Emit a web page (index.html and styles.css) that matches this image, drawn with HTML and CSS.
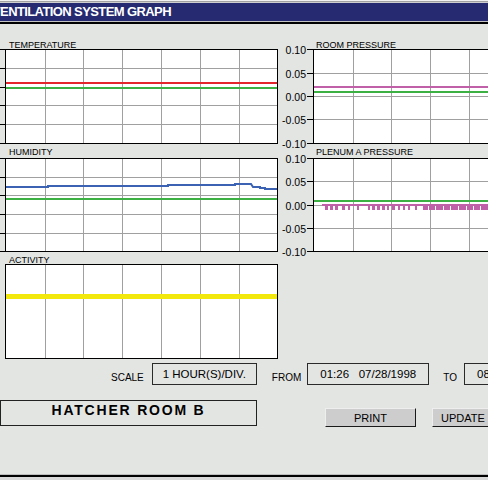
FILE: index.html
```html
<html>
	<head>
		<title>Ventilation System Graph</title>
		<link rel="stylesheet" href="styles.css">
	</head>
	<body>
<div class="frame-top"></div>
<div class="titlebar"><span>VENTILATION SYSTEM GRAPH</span></div>

<div class="main">
	<div class="charts">
		<!-- row 1 -->
		<div class="chart first">
			<div class="chart-title left">TEMPERATURE</div>
			<svg class="plot" width="278" height="95" viewBox="0 0 278 95">
				<path class="tick" d="M0 0.5H5M0 19.5H5M0 38.5H5M0 56.5H5M0 75.5H5M0 94.5H5"/>
				<rect class="bg" x="5.5" y="0.5" width="272" height="94"/>
				<path class="grid" d="M45.5 1V94M83.5 1V94M122.5 1V94M161.5 1V94M200.5 1V94M239.5 1V94M6 19.5H277M6 38.5H277M6 56.5H277M6 75.5H277"/>
				<path class="line red" d="M6 34H277"/>
				<path class="line green" d="M6 39H277"/>
			</svg>
		</div>
		<div class="chart first">
			<div class="chart-title right">ROOM PRESSURE</div>
			<svg class="plot open" width="208" height="95" viewBox="0 0 208 95">
				<rect class="fill" x="34" y="1" width="174" height="93"/>
				<path class="grid" d="M73.5 1V94M111.5 1V94M150.5 1V94M189.5 1V94M34 24.5H208M34 47.5H208M34 70.5H208"/>
				<path class="edge" d="M208 0.5H33.5V94.5H208"/>
				<path class="tick" d="M27 0.5H33M27 24.5H33M27 47.5H33M27 70.5H33M27 94.5H33"/>
				<text class="axis" x="26" y="4.5">0.10</text>
				<text class="axis" x="26" y="28.5">0.05</text>
				<text class="axis" x="26" y="51.5">0.00</text>
				<text class="axis" x="26" y="74.5">-0.05</text>
				<text class="axis" x="26" y="98.5">-0.10</text>
				<path class="line pink" d="M34 38H208"/>
				<path class="line green" d="M34 43H208"/>
			</svg>
		</div>

		<!-- row 2 -->
		<div class="chart">
			<div class="chart-title left spaced">HUMIDITY</div>
			<svg class="plot" width="278" height="94" viewBox="0 0 278 94">
				<path class="tick" d="M0 0.5H5M0 19.5H5M0 37.5H5M0 56.5H5M0 75.5H5M0 93.5H5"/>
				<rect class="bg" x="5.5" y="0.5" width="272" height="93"/>
				<path class="grid" d="M45.5 1V93M83.5 1V93M122.5 1V93M161.5 1V93M200.5 1V93M239.5 1V93M6 19.5H277M6 37.5H277M6 56.5H277M6 75.5H277"/>
				<path class="line blue" d="M6 29H48V28H168V27H235V26H251L253 29H260V30H265V31H277"/>
				<path class="line green" d="M6 41H277"/>
			</svg>
		</div>
		<div class="chart">
			<div class="chart-title right spaced">PLENUM A PRESSURE</div>
			<svg class="plot open" width="208" height="94" viewBox="0 0 208 94">
				<rect class="fill" x="34" y="1" width="174" height="92"/>
				<path class="grid" d="M73.5 1V93M111.5 1V93M150.5 1V93M189.5 1V93M34 23.5H208M34 47.5H208M34 70.5H208"/>
				<path class="edge" d="M208 0.5H33.5V93.5H208"/>
				<path class="tick" d="M27 0.5H33M27 23.5H33M27 47.5H33M27 70.5H33M27 93.5H33"/>
				<text class="axis" x="26" y="4.5">0.10</text>
				<text class="axis" x="26" y="27.5">0.05</text>
				<text class="axis" x="26" y="51.5">0.00</text>
				<text class="axis" x="26" y="74.5">-0.05</text>
				<text class="axis" x="26" y="97.5">-0.10</text>
				<path class="line green" d="M34 43H208"/>
				<path class="line pink" d="M42 47H208"/>
				<path class="spikes" d="M45 48h3v4h-3zM50 48h3v4h-3zM55 48h3v4h-3zM62 48h3v4h-3zM68 48h2v4h-2zM77 48h2v4h-2zM88 48h2v4h-2zM92 48h3v4h-3zM97 48h3v4h-3zM102 48h3v4h-3zM107 48h2v4h-2zM112 48h3v4h-3zM118 48h2v4h-2zM123 48h2v4h-2zM128 48h2v4h-2zM135 48h2v4h-2zM143 48h5v4h-5zM149 48h6v4h-6zM156 48h7v4h-7zM164 48h6v4h-6zM171 48h7v4h-7zM179 48h7v4h-7zM187 48h6v4h-6zM194 48h6v4h-6zM201 48h7v4h-7z"/>
			</svg>
		</div>

		<!-- row 3 -->
		<div class="chart">
			<div class="chart-title left">ACTIVITY</div>
			<svg class="plot" width="278" height="95" viewBox="0 0 278 95">
				<rect class="bg" x="5.5" y="0.5" width="272" height="94"/>
				<path class="grid" d="M45.5 1V94M83.5 1V94M122.5 1V94M161.5 1V94M200.5 1V94M239.5 1V94"/>
				<path class="line yellow" d="M6 32.5H277"/>
			</svg>
		</div>
	</div>

	<div class="controls">
		<span class="label">SCALE</span>
		<div class="field scale">1 HOUR(S)/DIV.</div>
		<span class="label from">FROM</span>
		<div class="field date">01:26&nbsp;&nbsp;&nbsp;07/28/1998</div>
		<span class="label to">TO</span>
		<div class="field date last">08:26&nbsp;&nbsp;&nbsp;07/28/1998</div>
	</div>

	<div class="room-row">
		<div class="room-name">HATCHER ROOM B</div>
		<button class="btn print">PRINT</button>
		<button class="btn update">UPDATE</button>
	</div>
</div>

<div class="frame-bottom"></div>
	</body>
</html>
```

FILE: styles.css
```css
HTML, BODY {
	margin: 0;
	overflow: hidden;
	}
BODY {
	background: #e3e5e3;
	display: flex;
	flex-direction: column;
	font-family: "Liberation Sans", Arial, sans-serif;
	height: 480px;
	width: 488px;
	}

/* window frame */
.frame-top {
	background: linear-gradient(#f2f2f2 0 1px, #a2a2a2 1px 2px, #cfcfcf 2px 3px);
	height: 3px;
	}
.titlebar {
	background: #262a70;
	border-bottom: 1px solid #c2c2c2;
	color: #fff;
	height: 18px;
	overflow: hidden;
	}
.titlebar span {
	display: block;
	font-size: 13px;
	font-weight: bold;
	letter-spacing: -0.6px;
	line-height: 18px;
	text-indent: -8px;
	white-space: nowrap;
	}
.main {
	border-top: 2px solid #000;
	flex: 1;
	}
.frame-bottom {
	background: #d8d8d8;
	border-top: 1px solid #bcbcbc;
	box-shadow: inset 0 2px 0 #000;
	height: 5px;
	}

/* charts */
.charts {
	display: grid;
	grid-template-columns: 280px 208px;
	padding-top: 17px;
	row-gap: 4px;
	}
.chart-title {
	font-size: 9px;
	height: 8px;
	line-height: 8px;
	white-space: nowrap;
	}
.chart-title.left { margin-left: 9px; }
.chart-title.right { margin-left: 36px; }
.chart-title.spaced { margin-bottom: 2px; }
.plot {
	display: block;
	shape-rendering: crispEdges;
	}
.plot.open { overflow: visible; }
.plot .line { shape-rendering: auto; }

.bg { fill: #fff; stroke: #000; }
.fill { fill: #fff; }
.edge { fill: none; stroke: #000; }
.tick { fill: none; stroke: #000; }
.grid { fill: none; stroke: #a0a0a0; }
.axis {
	fill: #000;
	font-family: "Liberation Sans", Arial, sans-serif;
	font-size: 10.5px;
	text-anchor: end;
	}
.line { fill: none; stroke-width: 2; }
.red { stroke: #e4252b; }
.green { stroke: #3cb043; }
.blue { stroke: #3b62b3; }
.pink { stroke: #c060a8; }
.yellow { stroke: #f2e80c; stroke-width: 5; }
.spikes { fill: #c060a8; }

/* scale / date row */
.controls {
	align-items: center;
	display: flex;
	height: 22px;
	margin: 4px 0 0 111px;
	}
.label {
	flex-shrink: 0;
	font-size: 10px;
	margin-top: 6px;
	}
.label.from { margin-left: 15px; }
.label.to { margin-left: 14px; }
.field {
	align-items: center;
	border: 1px solid #2a2a2a;
	box-sizing: border-box;
	display: flex;
	flex-shrink: 0;
	font-size: 11.5px;
	height: 22px;
	justify-content: center;
	white-space: nowrap;
	}
.field.scale { margin-left: 8px; width: 105px; }
.field.date { margin-left: 6px; width: 122px; }
.field.last { margin-left: 7px; }

/* room name and buttons */
.room-row {
	align-items: flex-start;
	display: flex;
	margin-top: 15px;
	}
.room-name {
	border: 1px solid #222;
	box-sizing: border-box;
	flex-shrink: 0;
	font-size: 14px;
	font-weight: bold;
	height: 26px;
	letter-spacing: 1.8px;
	line-height: 18px;
	text-align: center;
	width: 257px;
	}
.btn {
	background: #cdcdcd;
	border: 1px solid;
	border-color: #eeeeee #1a1a1a #1a1a1a #eeeeee;
	box-sizing: border-box;
	color: #000;
	flex-shrink: 0;
	font-family: "Liberation Sans", Arial, sans-serif;
	font-size: 11px;
	height: 19px;
	margin-top: 8px;
	padding: 0;
	}
.btn.print { margin-left: 68px; width: 91px; }
.btn.update { margin-left: 16px; width: 62px; }
```
